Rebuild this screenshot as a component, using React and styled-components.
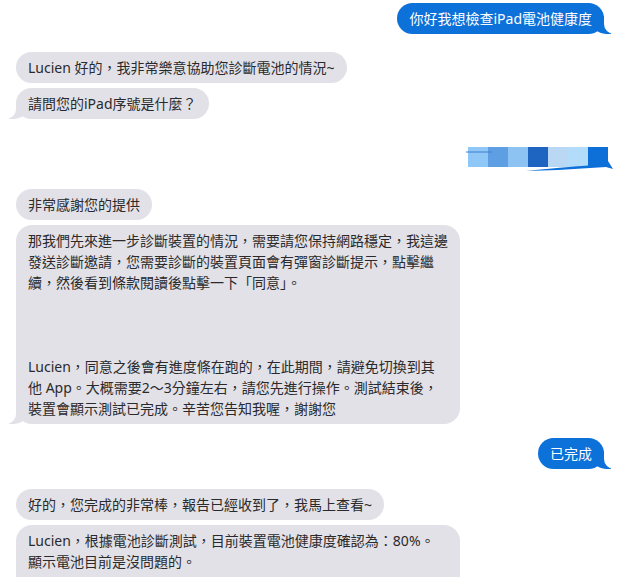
import React from "react";
import styled, { createGlobalStyle, css } from "styled-components";

const Global = createGlobalStyle`
  html, body { margin: 0; padding: 0; background: #ffffff; }
  body { font-family: "Noto Sans", "Noto Sans CJK TC", sans-serif; }
`;

const Thread = styled.div`
  display: flex;
  flex-direction: column;
  padding: 3px 25px 0 16px;
  width: 629px;
  height: 577px;
  box-sizing: border-box;
  overflow: hidden;
`;

const BLUE = "#0c71d9";
const GRAY = "#e2e1e7";

const Bubble = styled.div`
  position: relative;
  box-sizing: border-box;
  max-width: 445px;
  ${(p) => p.$wide && css`width: 444px;`}
  padding: 5px 12px;
  border-radius: 16px;
  font-size: 14px;
  line-height: 21px;
  white-space: pre-wrap;
  margin-top: ${(p) => p.$gap || 0}px;
  ${(p) =>
    p.$me
      ? css`
          align-self: flex-end;
          background: ${BLUE};
          color: #ffffff;
        `
      : css`
          align-self: flex-start;
          background: ${GRAY};
          color: #2a2a2c;
        `}
  ${(p) =>
    p.$tail &&
    (p.$me
      ? css`
          &::before {
            content: "";
            position: absolute;
            bottom: 0;
            right: -7px;
            width: 20px;
            height: 18px;
            background: ${BLUE};
            border-bottom-left-radius: 15px;
          }
          &::after {
            content: "";
            position: absolute;
            bottom: 0;
            right: -10px;
            width: 10px;
            height: 18px;
            background: #ffffff;
            border-bottom-left-radius: 10px;
          }
        `
      : css`
          &::before {
            content: "";
            position: absolute;
            bottom: 0;
            left: -7px;
            width: 20px;
            height: 18px;
            background: ${GRAY};
            border-bottom-right-radius: 15px;
          }
          &::after {
            content: "";
            position: absolute;
            bottom: 0;
            left: -10px;
            width: 10px;
            height: 18px;
            background: #ffffff;
            border-bottom-right-radius: 10px;
          }
        `)}
`;

const Redacted = styled.div`
  align-self: flex-end;
  margin-top: ${(p) => p.$gap || 0}px;
  margin-right: -12px;
  display: flex;
`;

const Pixelated = () => (
  <svg width="150" height="26" viewBox="0 0 150 26">
    <rect x="2" y="0" width="20" height="20" fill="#8fc7f7" />
    <rect x="22" y="0" width="20" height="20" fill="#5e9fe4" />
    <rect x="42" y="0" width="20" height="20" fill="#8cc3f3" />
    <rect x="62" y="0" width="20" height="20" fill="#1e65c1" />
    <rect x="82" y="0" width="20" height="20" fill="#bad8f4" />
    <rect x="102" y="0" width="20" height="20" fill="#b3dcfb" />
    <rect x="122" y="0" width="20" height="20" fill="#0d6fd8" />
    <path d="M0 5 L26 5" stroke="#3e7fcf" strokeWidth="1" />
    <path d="M60 24 Q110 19 132 18 L142 14 L147 22 L140 20 Q100 23 60 24 Z" fill="#0d6fd8" />
  </svg>
);

const LONG =
  "那我們先來進一步診斷裝置的情況，需要請您保持網路穩定，我這邊\n" +
  "發送診斷邀請，您需要診斷的裝置頁面會有彈窗診斷提示，點擊繼\n" +
  "續，然後看到條款閱讀後點擊一下「同意」。\n\n\n\n" +
  "Lucien，同意之後會有進度條在跑的，在此期間，請避免切換到其\n" +
  "他 App。大概需要2～3分鐘左右，請您先進行操作。測試結束後，\n" +
  "裝置會顯示測試已完成。辛苦您告知我喔，謝謝您";

const RESULT =
  "Lucien，根據電池診斷測試，目前裝置電池健康度確認為：80%。\n" +
  "顯示電池目前是沒問題的。\n\n";

export default function App() {
  return (
    <>
      <Global />
      <Thread>
        <Bubble $me $tail>你好我想檢查iPad電池健康度</Bubble>
        <Bubble $gap={18}>Lucien 好的，我非常樂意協助您診斷電池的情況~</Bubble>
        <Bubble $gap={5} $tail>請問您的iPad序號是什麼？</Bubble>
        <Redacted $gap={28}>
          <Pixelated />
        </Redacted>
        <Bubble $gap={16}>非常感謝您的提供</Bubble>
        <Bubble $gap={5} $tail $wide>{LONG}</Bubble>
        <Bubble $me $tail $gap={14}>已完成</Bubble>
        <Bubble $gap={20}>好的，您完成的非常棒，報告已經收到了，我馬上查看~</Bubble>
        <Bubble $gap={5} $wide>{RESULT}</Bubble>
      </Thread>
    </>
  );
}
